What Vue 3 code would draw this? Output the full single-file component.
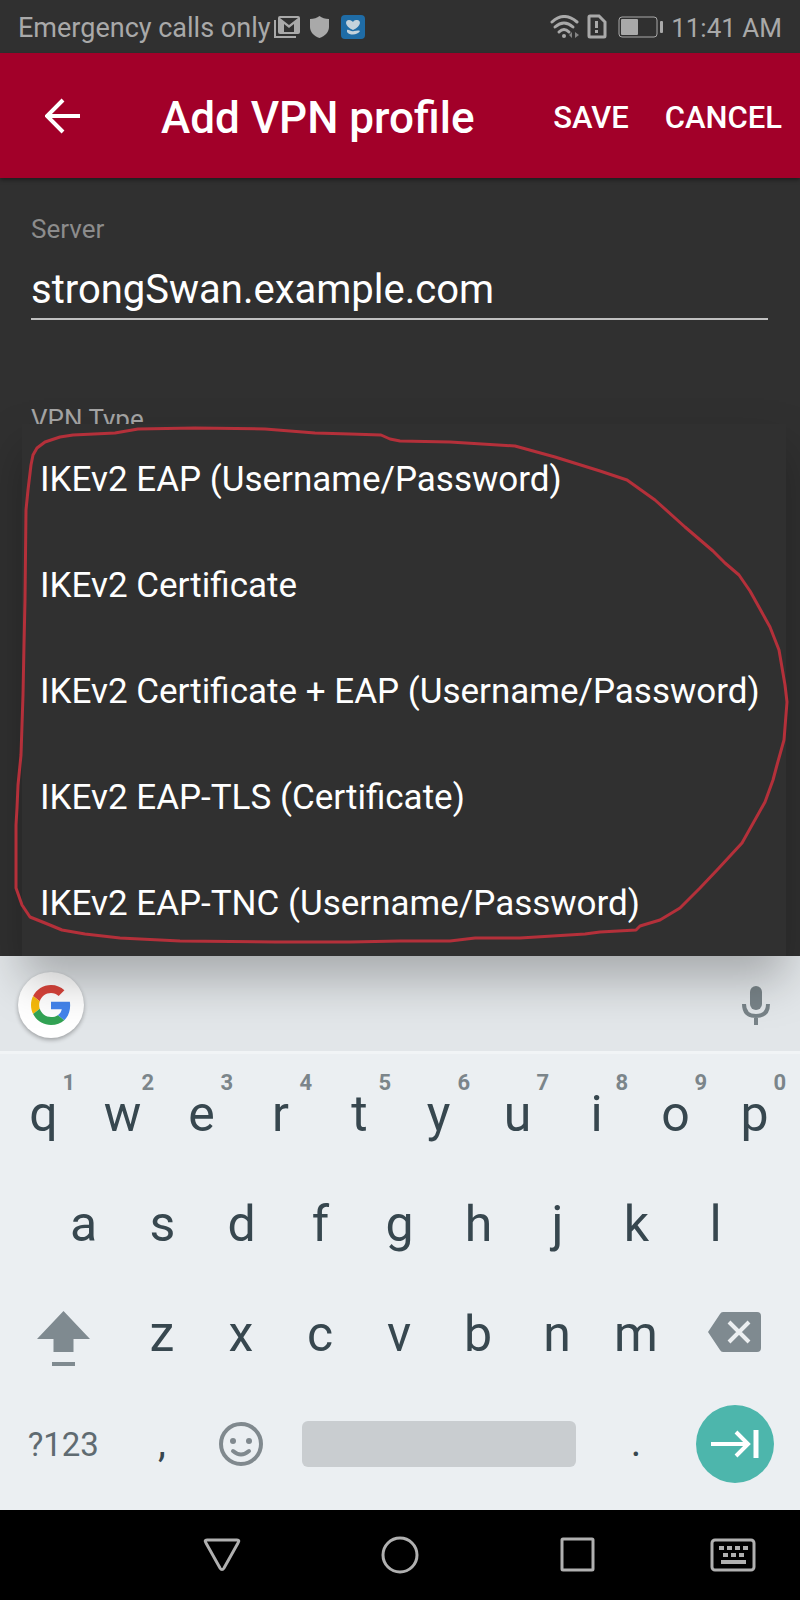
<script setup>
import { ref } from 'vue'

const server = ref('strongSwan.example.com')
const selected = ref('')

const vpnTypes = [
  'IKEv2 EAP (Username/Password)',
  'IKEv2 Certificate',
  'IKEv2 Certificate + EAP (Username/Password)',
  'IKEv2 EAP-TLS (Certificate)',
  'IKEv2 EAP-TNC (Username/Password)'
]

const topRow = [...'qwertyuiop'].map((letter, i) => ({ letter, hint: (i + 1) % 10 }))
const homeRow = [...'asdfghjkl']
const bottomRow = [...'zxcvbnm']
</script>

<template>
  <div class="screen">
    <div class="status-bar">
      <span class="carrier">Emergency calls only</span>
      <svg class="status-mail" viewBox="0 0 26 22">
        <path d="M1 4V21H22" fill="none" stroke="currentColor" stroke-width="2" />
        <rect x="5" y="1" width="20" height="16" rx="1" fill="none" stroke="currentColor" stroke-width="2" />
        <path d="M6 2V16H10V8L15 12L20 8V16H24V2L15 9Z" fill="currentColor" />
      </svg>
      <svg class="status-shield" viewBox="0 0 19 22">
        <path d="M9.500 0C12 2 15 3 19 3V11C19 16 15 20 9.500 22C4 20 0 16 0 11V3C4 3 7 2 9.500 0Z" fill="currentColor" />
      </svg>
      <svg class="status-app" viewBox="0 0 24 24">
        <rect width="24" height="24" rx="4" fill="#1f6ca6" />
        <path d="M12 15C3 11 4 5 8 5C10 5 11 6 12 7C13 5 15 5 16 5C20 5 21 11 12 15Z" fill="#c4d2dc" />
        <path d="M6 15C8 14 10 17 13 16C15 16 17 15 19 16C17 20 9 21 6 17Z" fill="#c4d2dc" />
      </svg>
      <div class="status-right">
        <svg class="status-wifi" viewBox="0 0 29 24">
          <g fill="none" stroke="currentColor" stroke-width="3" stroke-linecap="round">
            <path d="M2 7Q14 -4 27 7" />
            <path d="M5 12Q14 4 23 12" />
            <path d="M9 17Q14 12 19 17" />
          </g>
          <circle cx="14" cy="21" r="2" fill="currentColor" />
          <path d="M19 20L22 17V23ZM29 20L25 17V23Z" fill="currentColor" opacity="0.7" />
        </svg>
        <svg class="status-sim" viewBox="0 0 20 25">
          <path d="M3 2H12L18 8V22Q18 23 17 23H3Q2 23 2 22V3Q2 2 3 2Z" fill="none" stroke="currentColor" stroke-width="3" />
          <path d="M8 7H11V14H8ZM8 16H11V19H8Z" fill="currentColor" />
        </svg>
        <svg class="status-battery" viewBox="0 0 45 22">
          <rect x="1" y="1" width="38" height="20" rx="3" fill="none" stroke="currentColor" />
          <rect x="3" y="3" width="17" height="16" rx="1" fill="currentColor" />
          <rect x="42" y="5" width="3" height="12" rx="1" fill="currentColor" />
        </svg>
        <span>11:41 AM</span>
      </div>
    </div>

    <header class="app-bar">
      <button class="back" aria-label="Back">
        <svg viewBox="0 0 36 40">
          <path d="M18 2L2 18L18 34M2 18H35" fill="none" stroke="currentColor" stroke-width="4" />
        </svg>
      </button>
      <h1>Add VPN profile</h1>
      <button class="action">SAVE</button>
      <button class="action">CANCEL</button>
    </header>

    <main class="form">
      <label class="field-label" for="server">Server</label>
      <input id="server" v-model="server" class="server-input" type="text" />
      <span id="vpn-type" class="field-label type-label">VPN Type</span>

      <div class="type-menu" role="listbox" aria-labelledby="vpn-type">
        <button
          v-for="type in vpnTypes"
          :key="type"
          role="option"
          :aria-selected="selected === type"
          @click="selected = type"
        >
          {{ type }}
        </button>
        <svg class="marker" viewBox="22 424 764 532" preserveAspectRatio="none">
          <path d="M26 510L28 490L31 465L33 455L37 448L45 442L60 437L73 435L115 433L138 429L195 428L265 429L315 433L350 434L381 435L390 439L400 441L450 442L515 446L555 457L600 471L627 480L655 500L685 527L713 551L725 563L739 575L750 591L770 627L779 650L785 685L787 702L784 740L777 765L773 780L765 802L742 843L718 869L700 888L680 908L660 920L640 926L636 930L600 932L585 934L520 938L475 938L450 941L400 941L350 942L275 942L180 941L120 938L85 934L62 930L45 923L30 917L22 905L16 888L16 825L17 808L18 785L21 755L23 695L24 645L25 600Z" />
        </svg>
      </div>
    </main>

    <div class="suggestions">
      <button class="google" aria-label="Google search">
        <svg viewBox="0 0 48 48">
          <path fill="#d8433a" d="M24 9.500c3.540 0 6.710 1.220 9.210 3.600l6.850-6.850C35.900 2.380 30.470 0 24 0 14.620 0 6.510 5.380 2.560 13.220l7.980 6.190C12.430 13.720 17.740 9.500 24 9.500z" />
          <path fill="#4384ec" d="M46.980 24.550c0-1.570-.15-3.090-.38-4.550H24v9.020h12.940c-.58 2.960-2.260 5.480-4.780 7.180l7.730 6c4.510-4.180 7.090-10.360 7.090-17.650z" />
          <path fill="#f5b90c" d="M10.530 28.590c-.48-1.450-.76-2.990-.76-4.590s.27-3.140.76-4.590l-7.980-6.190C.92 16.460 0 20.120 0 24c0 3.880.92 7.540 2.560 10.780l7.970-6.190z" />
          <path fill="#32a354" d="M24 48c6.480 0 11.930-2.130 15.890-5.810l-7.730-6c-2.150 1.450-4.920 2.300-8.160 2.300-6.260 0-11.570-4.220-13.470-9.910l-7.980 6.190C6.510 42.620 14.620 48 24 48z" />
        </svg>
      </button>
      <button class="mic" aria-label="Voice input">
        <svg viewBox="0 0 28 40">
          <rect x="8" y="1" width="12" height="24" rx="6" fill="currentColor" />
          <path d="M2 19Q2 31 14 31Q26 31 26 19M14 31V40" fill="none" stroke="currentColor" stroke-width="4" />
        </svg>
      </button>
    </div>

    <div class="keyboard">
      <div class="key-row">
        <button v-for="key in topRow" :key="key.letter" class="key">
          {{ key.letter }}<span class="hint">{{ key.hint }}</span>
        </button>
      </div>
      <div class="key-row home-row">
        <button v-for="letter in homeRow" :key="letter" class="key">{{ letter }}</button>
      </div>
      <div class="key-row">
        <button class="key wide" aria-label="Shift">
          <svg class="shift-icon" viewBox="0 0 53 55">
            <path d="M26.500 0L53 28H36.500V41H16.500V28H0ZM15 51H38V55H15Z" fill="#7f8a90" />
          </svg>
        </button>
        <button v-for="letter in bottomRow" :key="letter" class="key">{{ letter }}</button>
        <button class="key wide" aria-label="Delete">
          <svg class="delete-icon" viewBox="0 0 53 40">
            <path d="M15 0H49Q53 0 53 4V36Q53 40 49 40H15Q13 40 12 38L0 20L12 2Q13 0 15 0Z" fill="#7f8a90" />
            <path d="M21 10L41 30M41 10L21 30" stroke="#eceff1" stroke-width="4" />
          </svg>
        </button>
      </div>
      <div class="key-row">
        <button class="key wide symbols">?123</button>
        <button class="key punct">,</button>
        <button class="key" aria-label="Emoji">
          <svg class="emoji-icon" viewBox="0 0 44 44">
            <circle cx="22" cy="22" r="20" fill="none" stroke="#80898e" stroke-width="4" />
            <circle cx="14" cy="19" r="3" fill="#80898e" />
            <circle cx="30" cy="19" r="3" fill="#80898e" />
            <path d="M14 29Q22 36 30 29" fill="none" stroke="#80898e" stroke-width="4" stroke-linecap="round" />
          </svg>
        </button>
        <button class="key space" aria-label="Space"><span></span></button>
        <button class="key punct">.</button>
        <button class="key wide" aria-label="Next">
          <span class="next">
            <svg viewBox="0 0 48 28">
              <path d="M0 14H38M25 2L37 14L25 26" fill="none" stroke="#fff" stroke-width="4" />
              <path d="M45 0V28" stroke="#fff" stroke-width="5" />
            </svg>
          </span>
        </button>
      </div>
    </div>

    <nav class="nav-bar">
      <button aria-label="Hide keyboard">
        <svg viewBox="0 0 38 34">
          <path d="M4 2H34Q37 2 35 5L21 30Q19 33 17 30L3 5Q1 2 4 2Z" />
        </svg>
      </button>
      <button aria-label="Home">
        <svg viewBox="0 0 38 38"><circle cx="19" cy="19" r="17" /></svg>
      </button>
      <button aria-label="Recent apps">
        <svg viewBox="0 0 38 38"><rect x="3" y="3" width="31" height="31" rx="1" /></svg>
      </button>
      <button aria-label="Change keyboard">
        <svg class="keyboard-icon" viewBox="0 0 46 34">
          <rect x="2" y="2" width="42" height="30" rx="3" />
          <path d="M9 10H38" stroke-width="4" stroke-dasharray="5 3" />
          <path d="M13 17H34" stroke-width="4" stroke-dasharray="5 3" />
          <path d="M11 24H36" stroke-width="4" />
        </svg>
      </button>
    </nav>
  </div>
</template>

<style>
body {
  margin: 0;
  background: #303030;
}
</style>

<style scoped>
.screen {
  display: flex;
  flex-direction: column;
  min-height: 100vh;
  font-family: Roboto, "Liberation Sans", sans-serif;
  background: #303030;
}

svg {
  display: block;
}

button {
  padding: 0;
  font-family: inherit;
  color: inherit;
  background: none;
  border: none;
  cursor: pointer;
}

.status-bar {
  display: flex;
  align-items: center;
  height: 53px;
  padding: 0 18px;
  font-size: 26px;
  color: #a9a9a9;
}

.status-bar span {
  padding-top: 2px;
}

.status-bar .carrier {
  font-size: 27px;
}

.status-mail {
  width: 26px;
  height: 22px;
  margin-left: 4px;
}

.status-shield {
  width: 19px;
  height: 22px;
  margin-left: 10px;
}

.status-app {
  width: 24px;
  height: 24px;
  margin-left: 12px;
}

.status-right {
  display: flex;
  align-items: center;
  margin-left: auto;
}

.status-wifi {
  width: 29px;
  height: 24px;
}

.status-sim {
  width: 20px;
  height: 25px;
  margin-left: 8px;
}

.status-battery {
  width: 45px;
  height: 22px;
  margin: 0 8px 0 11px;
}

.app-bar {
  position: relative;
  display: flex;
  align-items: center;
  box-sizing: border-box;
  height: 125px;
  padding: 4px 18px 0 45px;
  color: #fff;
  background: #a20029;
  box-shadow: 0 2px 4px rgba(0, 0, 0, 0.4);
}

.back svg {
  width: 36px;
  height: 40px;
}

h1 {
  flex: 1;
  margin: 0 0 0 80px;
  font-size: 44px;
  font-weight: 500;
}

.action {
  margin-left: 36px;
  font-size: 31px;
  font-weight: 500;
}

.form {
  position: relative;
  z-index: 1;
  display: flex;
  flex: 1;
  flex-direction: column;
  min-height: 740px;
  box-sizing: border-box;
  padding: 36px 32px 0 31px;
}

.field-label {
  font-size: 26px;
  line-height: 30px;
  color: #8c8c8c;
}

.server-input {
  box-sizing: border-box;
  width: 100%;
  height: 60px;
  margin-top: 16px;
  padding: 0;
  font-family: inherit;
  font-size: 40px;
  color: #fff;
  background: none;
  border: none;
  border-bottom: 2px solid #c0c0c0;
  border-radius: 0;
  outline: none;
}

.type-label {
  margin-top: 84px;
  color: #a5a5a5;
}

/* drop-down floats over the form and throws its shadow on the keyboard */
.type-menu {
  position: absolute;
  right: 14px;
  bottom: 0;
  left: 22px;
  display: flex;
  flex-direction: column;
  padding-top: 2px;
  background: #303030;
  box-shadow: 0 24px 44px rgba(0, 0, 0, 0.26);
}

.type-menu button {
  height: 106px;
  padding: 0 20px 0 18px;
  font-size: 35px;
  color: #fff;
  text-align: left;
  white-space: nowrap;
}

.marker {
  position: absolute;
  inset: 0;
  width: 100%;
  height: 100%;
  overflow: visible;
  pointer-events: none;
}

.marker path {
  fill: none;
  stroke: #b4303a;
  stroke-width: 3;
  stroke-linejoin: round;
}

.suggestions {
  display: flex;
  align-items: center;
  justify-content: space-between;
  height: 93px;
  padding: 2px 30px 0 18px;
  background: #e2e6e9;
  border-bottom: 3px solid #f1f4f6;
}

.google {
  display: flex;
  align-items: center;
  justify-content: center;
  width: 66px;
  height: 66px;
  background: #fff;
  border-radius: 50%;
  box-shadow: 0 2px 4px rgba(0, 0, 0, 0.3);
}

.google svg {
  width: 40px;
  height: 40px;
}

.mic {
  color: #788388;
}

.mic svg {
  width: 28px;
  height: 40px;
}

.keyboard {
  padding: 5px 6px 11px 4px;
  background: #ebeff2;
}

.key-row {
  display: flex;
  height: 110px;
}

.home-row {
  padding: 0 39px 0 40px;
}

.key {
  position: relative;
  display: flex;
  flex: 2 1 0;
  align-items: center;
  justify-content: center;
  font-size: 50px;
  color: #37474f;
}

.key.wide {
  flex-grow: 3;
}

.hint {
  position: absolute;
  top: 13px;
  right: 8px;
  font-size: 22px;
  font-weight: 700;
  line-height: 22px;
  color: #7b858a;
}

.symbols {
  font-size: 33px;
  color: #5f6b71;
}

.punct {
  padding-bottom: 4px;
  font-size: 40px;
}

.shift-icon {
  width: 53px;
  height: 55px;
  margin-top: 8px;
}

.delete-icon {
  width: 53px;
  height: 40px;
  margin-bottom: 4px;
}

.emoji-icon {
  width: 44px;
  height: 44px;
}

.key.space {
  flex-grow: 8;
}

.space span {
  flex: 1;
  height: 46px;
  margin: 0 21px;
  background: #c9cdd0;
  border-radius: 6px;
}

.next {
  display: flex;
  align-items: center;
  justify-content: center;
  width: 78px;
  height: 78px;
  background: #4db6ac;
  border-radius: 50%;
}

.next svg {
  width: 48px;
  height: 28px;
}

.nav-bar {
  display: grid;
  grid-template-columns: 4fr 4fr 4fr 3fr;
  height: 90px;
  padding-left: 133px;
  background: #000;
}

.nav-bar button {
  display: flex;
  align-items: center;
  justify-content: center;
}

.nav-bar svg {
  width: 38px;
  height: 38px;
  fill: none;
  stroke: #b0b0b0;
  stroke-width: 3;
}

.nav-bar .keyboard-icon {
  width: 46px;
  height: 34px;
}
</style>
